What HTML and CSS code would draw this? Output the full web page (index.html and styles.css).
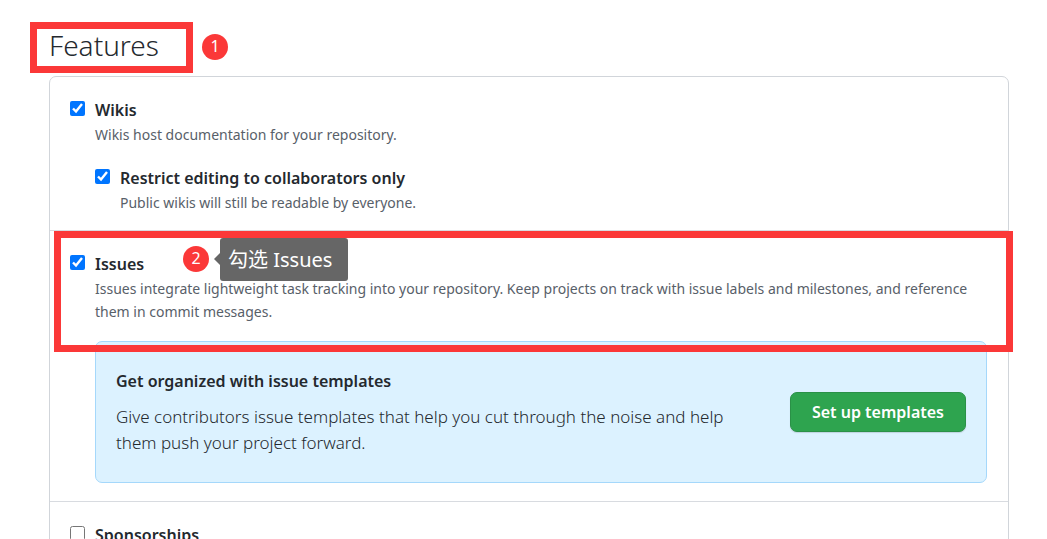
FILE: index.html
```html
<!DOCTYPE html>
<html lang="en">
<head>
    <meta charset="UTF-8">
    <meta name="viewport" content="width=device-width, initial-scale=1.0">
    <title>Features</title>
    <link rel="stylesheet" href="styles.css">
</head>
<body>

    <main class="settings">
        <header class="section-header">
            <h2 class="section-title">Features</h2>
            <span class="frame frame-title"></span>
            <span class="step step-one">1</span>
        </header>

        <div class="box">
            <!-- Wikis -->
            <div class="row">
                <input type="checkbox" id="wikis" class="check" checked>
                <div class="row-body">
                    <label for="wikis">Wikis</label>
                    <p class="note">Wikis host documentation for your repository.</p>
                    <div class="sub-row">
                        <input type="checkbox" id="restrict" class="check" checked>
                        <div class="row-body">
                            <label for="restrict">Restrict editing to collaborators only</label>
                            <p class="note">Public wikis will still be readable by everyone.</p>
                        </div>
                    </div>
                </div>
            </div>

            <!-- Issues -->
            <div class="row">
                <input type="checkbox" id="issues" class="check" checked>
                <div class="row-body">
                    <label for="issues">Issues</label>
                    <p class="note">Issues integrate lightweight task tracking into your repository. Keep projects on track with issue labels and milestones, and reference them in commit messages.</p>
                    <div class="callout">
                        <div class="callout-text">
                            <h3>Get organized with issue templates</h3>
                            <p>Give contributors issue templates that help you cut through the noise and help them push your project forward.</p>
                        </div>
                        <button type="button" class="btn">Set up templates</button>
                    </div>
                </div>
                <span class="frame frame-issues"></span>
                <span class="step step-two">2</span>
                <span class="tip" lang="zh">勾选 Issues</span>
            </div>

            <!-- Sponsorships -->
            <div class="row">
                <input type="checkbox" id="sponsorships" class="check">
                <div class="row-body">
                    <label for="sponsorships">Sponsorships</label>
                </div>
            </div>
        </div>
    </main>

</body>
</html>
```
FILE: styles.css
```css
* {
    box-sizing: border-box;
}

body {
    margin: 0;
    background: #fff;
    color: #24292e;
    font-family: "Noto Sans", "Noto Sans CJK SC", sans-serif;
    font-size: 16px;
    line-height: 26px;
    overflow: hidden;
}

h2,
h3,
p {
    margin: 0;
}

.settings {
    padding: 24px 38px 0 49px;
}

.section-header {
    position: relative;
    padding-bottom: 10px;
}

.section-title {
    font-size: 28px;
    font-weight: 300;
    line-height: 42px;
}

.box {
    border: 1px solid #d1d5da;
    border-radius: 7px;
}

.row {
    position: relative;
    display: flex;
    gap: 10px;
    padding: 20px 21px 18px 20px;
}

.row:first-child {
    padding-bottom: 16px;
}

.row + .row {
    border-top: 1px solid #d8dbe0;
}

.row-body {
    flex: 1;
}

.row label {
    display: block;
    font-size: 16px;
    font-weight: 600;
}

.check {
    flex: none;
    width: 15px;
    height: 15px;
    margin: 4px 0 0;
    accent-color: #0075ff;
}

.note {
    color: #586069;
    font-size: 14px;
    line-height: 23px;
}

.sub-row {
    display: flex;
    gap: 10px;
    margin-top: 19px;
}

.callout {
    display: flex;
    align-items: center;
    justify-content: space-between;
    gap: 40px;
    margin-top: 18px;
    padding: 26px 20px;
    background: #dcf2ff;
    border: 1px solid #a5d8fb;
    border-radius: 7px;
}

.callout-text {
    max-width: 630px;
}

.callout h3 {
    margin-bottom: 10px;
    font-size: 16px;
    font-weight: 600;
    line-height: 26px;
}

.callout p {
    font-size: 17px;
    font-weight: 300;
}

.btn {
    flex: none;
    height: 40px;
    padding: 0 21px;
    background: #2ea44f;
    border: 1px solid #2a9147;
    border-radius: 7px;
    box-shadow: 0 1px 1px rgba(27, 31, 35, 0.15);
    color: #fff;
    font-family: inherit;
    font-size: 16px;
    font-weight: 600;
    cursor: pointer;
}

/* Numbered walkthrough marks */
.frame {
    position: absolute;
    border: 7px solid #fb3838;
    pointer-events: none;
}

.frame-title {
    top: -2px;
    left: -19px;
    width: 163px;
    height: 51px;
}

.frame-issues {
    top: 0;
    right: -5px;
    left: 4px;
    height: 121px;
}

.step {
    position: absolute;
    width: 26px;
    height: 26px;
    border-radius: 50%;
    background: #fb3838;
    color: #fff;
    font-size: 16px;
    line-height: 25px;
    text-align: center;
}

.step-one {
    top: 10px;
    left: 153px;
}

.step-two {
    top: 15px;
    left: 133px;
}

.tip {
    position: absolute;
    top: 7px;
    left: 170px;
    padding: 0 16px 0 8px;
    background: #666;
    border-radius: 3px;
    color: #fff;
    font-size: 20px;
    line-height: 43px;
    white-space: nowrap;
}

.tip::before {
    content: "";
    position: absolute;
    top: 15px;
    left: -6px;
    border: 6px solid transparent;
    border-right-color: #666;
    border-left: 0;
}
```
